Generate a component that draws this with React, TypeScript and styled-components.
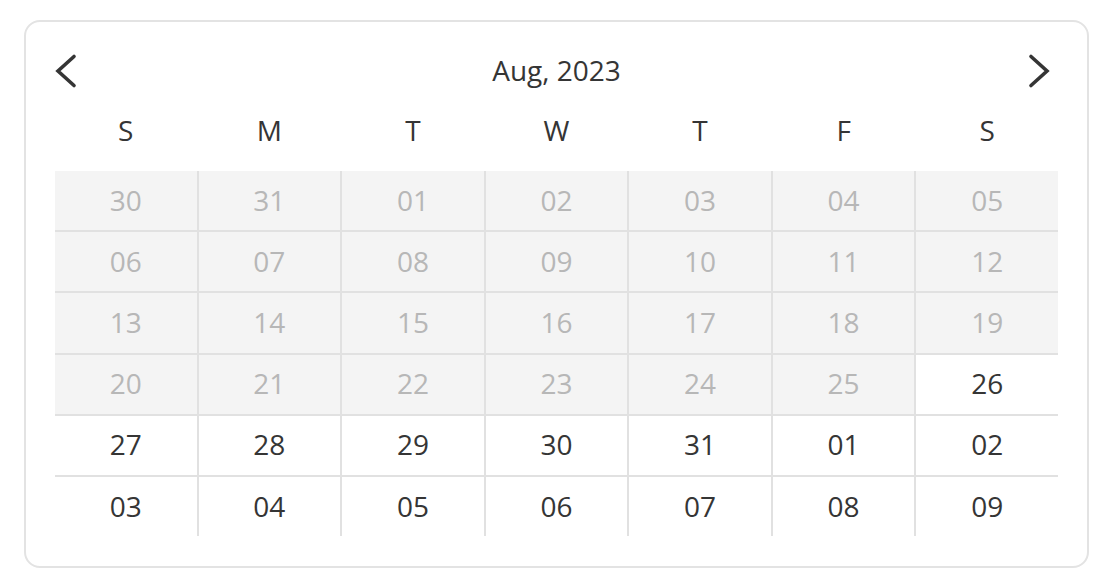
import React from 'react';
import { createGlobalStyle, styled } from 'styled-components';

const GlobalStyle = createGlobalStyle`
  html, body {
    margin: 0;
    padding: 0;
    background: #ffffff;
  }
  body {
    font-family: 'Open Sans', 'Liberation Sans', sans-serif;
    color: #353535;
  }
`;

const WEEKDAYS = ['S', 'M', 'T', 'W', 'T', 'F', 'S'];

type Day = { label: string; past: boolean };

const buildDays = (): Day[] => {
  const labels = [
    '30', '31', '01', '02', '03', '04', '05',
    '06', '07', '08', '09', '10', '11', '12',
    '13', '14', '15', '16', '17', '18', '19',
    '20', '21', '22', '23', '24', '25', '26',
    '27', '28', '29', '30', '31', '01', '02',
    '03', '04', '05', '06', '07', '08', '09',
  ];
  // everything before the 26th is disabled
  return labels.map((label, i) => ({ label, past: i < 27 }));
};

const Chevron = ({ dir }: { dir: 'left' | 'right' }) => (
  <svg width="30" height="40" viewBox="0 0 30 40" fill="none">
    <polyline
      points={dir === 'left' ? '19,5.5 3,20 19,34.5' : '3,5.5 19,20 3,34.5'}
      stroke="#353535"
      strokeWidth="3.6"
      strokeLinecap="round"
      strokeLinejoin="miter"
    />
  </svg>
);

const App = () => {
  const days = buildDays();

  return (
    <>
      <GlobalStyle />
      <Card>
        <Header>
          <NavButton aria-label="previous month">
            <Chevron dir="left" />
          </NavButton>
          <Title>Aug, 2023</Title>
          <NavButton aria-label="next month">
            <Chevron dir="right" />
          </NavButton>
        </Header>
        <WeekRow>
          {WEEKDAYS.map((d, i) => (
            <WeekDay key={i}>{d}</WeekDay>
          ))}
        </WeekRow>
        <DayGrid>
          {days.map((d, i) => (
            <DayCell key={i} $past={d.past}>
              {d.label}
            </DayCell>
          ))}
        </DayGrid>
      </Card>
    </>
  );
};

export default App;

const Card = styled.div`
  box-sizing: border-box;
  width: 1065px;
  margin: 20px 0 0 24px;
  padding: 29px 29px 30px;
  border: 2px solid #e3e3e3;
  border-radius: 16px;
  background: #ffffff;
`;

const Header = styled.div`
  display: flex;
  align-items: center;
  justify-content: space-between;
  height: 40px;
  margin-bottom: 20px;
`;

const NavButton = styled.button`
  display: flex;
  padding: 0;
  border: none;
  background: none;
  cursor: pointer;
`;

const Title = styled.div`
  font-size: 28px;
  line-height: 40px;
  padding-bottom: 2px;
  color: #353535;
`;

const WeekRow = styled.div`
  display: grid;
  grid-template-columns: repeat(7, 1fr);
  column-gap: 2px;
  height: 40px;
  margin-bottom: 20px;
`;

const WeekDay = styled.div`
  display: flex;
  align-items: center;
  justify-content: center;
  padding-bottom: 2px;
  font-size: 28px;
  color: #353535;
`;

const DayGrid = styled.div`
  display: grid;
  grid-template-columns: repeat(7, 1fr);
  grid-auto-rows: 59.2px;
  gap: 2px;
  background: #e1e1e1;
`;

const DayCell = styled.div<{ $past: boolean }>`
  display: flex;
  align-items: center;
  justify-content: center;
  padding-bottom: 2px;
  font-size: 28px;
  background: ${(p) => (p.$past ? '#f4f4f4' : '#ffffff')};
  color: ${(p) => (p.$past ? '#b7b7b7' : '#353535')};
`;
